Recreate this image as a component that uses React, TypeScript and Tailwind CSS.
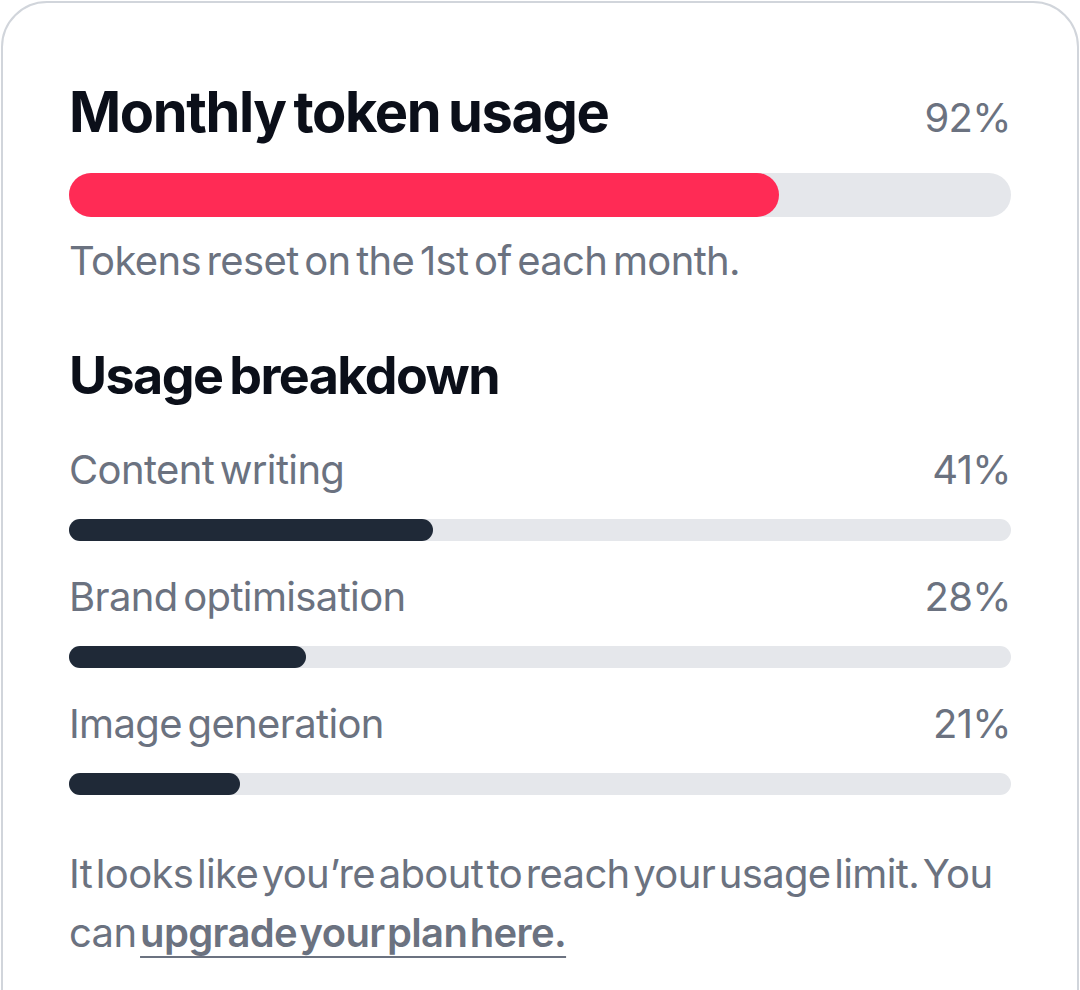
const breakdown = [
  { label: 'Content writing', value: '41%', width: 'w-[364px]', mt: 'mt-[48px]' },
  { label: 'Brand optimisation', value: '28%', width: 'w-[237px]', mt: 'mt-[36px]' },
  { label: 'Image generation', value: '21%', width: 'w-[171px]', mt: 'mt-[36px]' },
];

const UsageRow = ({ label, value, width, mt }: { label: string; value: string; width: string; mt: string }) => (
  <div className={mt}>
    <div className="flex items-baseline justify-between text-[40px] leading-none text-[#6b7280]">
      <span>{label}</span>
      <span>{value}</span>
    </div>
    <div className="mt-[29px] h-[22px] w-full rounded-full bg-[#e5e7eb]">
      <div className={`h-full rounded-full bg-[#1f2937] ${width}`} />
    </div>
  </div>
);

export default function App() {
  return (
    <div className="h-[990px] w-[1080px] overflow-hidden bg-white px-[1px] pt-[1px] font-['Inter',sans-serif] tracking-[-0.04em] [word-spacing:-5px]">
      <div className="h-[1100px] rounded-t-[46px] border-2 border-[#d1d5db] bg-white px-[66px] pt-[81px]">
        <div className="flex items-baseline justify-between">
          <h2 className="text-[56px] font-bold leading-none tracking-[-0.025em] text-[#0b0f19] [word-spacing:-4px]">
            Monthly token usage
          </h2>
          <span className="text-[40px] leading-none text-[#6b7280]">92%</span>
        </div>
        <div className="mt-[33px] h-[44px] w-full rounded-full bg-[#e5e7eb]">
          <div className="h-full w-[710px] rounded-full bg-[#ff2b55]" />
        </div>
        <p className="mt-[24px] text-[40px] leading-none text-[#6b7280]">Tokens reset on the 1st of each month.</p>

        <h3 className="mt-[69px] text-[52px] font-bold leading-none tracking-[-0.03em] text-[#0b0f19] [word-spacing:-4px]">
          Usage breakdown
        </h3>
        {breakdown.map((row) => (
          <UsageRow key={row.label} {...row} />
        ))}

        <p className="mt-[49px] text-[40px] leading-[59px] text-[#6b7280] [word-spacing:-7px]">
          It looks like you’re about to reach your usage limit. You can{' '}
          <a href="#" className="font-semibold underline decoration-2 underline-offset-[9px]">
            upgrade your plan here.
          </a>
        </p>
      </div>
    </div>
  );
}
